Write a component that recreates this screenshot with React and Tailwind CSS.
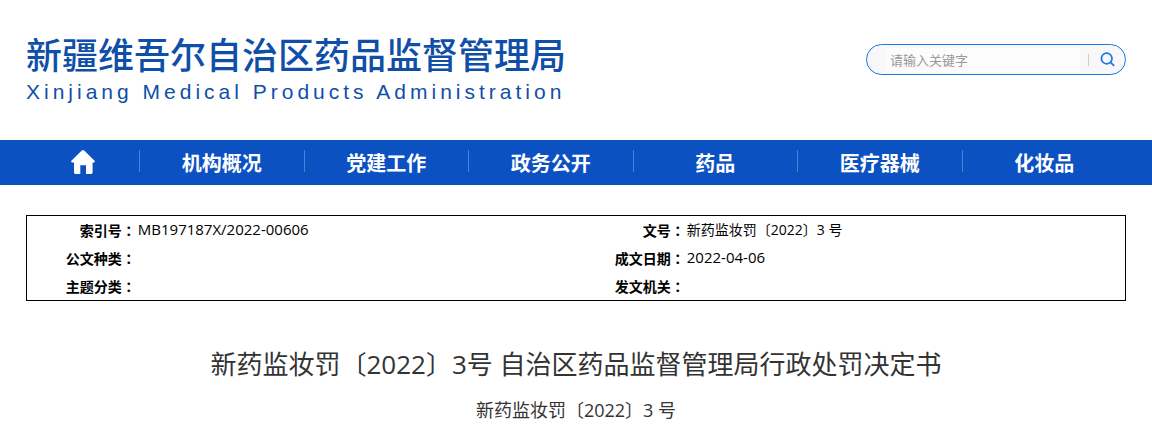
import React, { useState } from "react";

const navItems = ["机构概况", "党建工作", "政务公开", "药品", "医疗器械", "化妆品"];

const infoRows = [
  [
    { label: "索引号", value: "MB197187X/2022-00606", size: "text-[15px]" },
    { label: "文号", value: "新药监妆罚〔2022〕3 号", size: "text-sm" },
  ],
  [
    { label: "公文种类", value: "", size: "text-sm" },
    { label: "成文日期", value: "2022-04-06", size: "text-[15px]" },
  ],
  [
    { label: "主题分类", value: "", size: "text-sm" },
    { label: "发文机关", value: "", size: "text-sm" },
  ],
];

const HomeIcon = () => (
  <svg width="24" height="24" viewBox="0 0 24 24" fill="#fff" aria-hidden="true">
    <path d="M12 0 Q12.6 0 13.2 0.6 L23.6 10.8 Q24.4 12.4 22.8 12.4 H21.6 V22.6 Q21.6 24 20.2 24 H15 V15.2 H9.3 V24 H4.4 Q3 24 3 22.6 V12.4 H1.2 Q-0.4 12.4 0.4 10.8 L10.8 0.6 Q11.4 0 12 0 Z" />
  </svg>
);

const SearchIcon = () => (
  <svg width="15" height="15" viewBox="0 0 15 15" fill="none" stroke="#1677ea" strokeWidth="1.7" aria-hidden="true">
    <circle cx="6.7" cy="6.5" r="5.3" />
    <path d="M10.5 10.3 L14.2 13.9" />
  </svg>
);

const App = () => {
  const [keyword, setKeyword] = useState("");

  return (
    <div className="bg-white font-['Open_Sans','Noto_Sans_CJK_SC',sans-serif]" lang="zh-CN">
      {/* Header */}
      <header className="flex items-start justify-between px-[26px] pt-[27px] pb-[35px]">
        <div className="text-[#0f4fa8]">
          <h1 className="font-['Noto_Sans_CJK_SC',sans-serif] text-4xl leading-[52px] font-medium">
            新疆维吾尔自治区药品监督管理局
          </h1>
          <p className="font-['Liberation_Sans',sans-serif] text-[21px] leading-[26px] tracking-[4px] whitespace-nowrap">
            Xinjiang Medical Products Administration
          </p>
        </div>

        <form
          className="mt-[17px] flex h-[31px] w-[260px] items-center rounded-full border border-[#1677ea] bg-[#f8f8f8] pr-2 pl-[19px]"
          onSubmit={(e) => e.preventDefault()}
        >
          <input
            type="text"
            aria-label="请输入关键字"
            placeholder="请输入关键字"
            value={keyword}
            onChange={(e) => setKeyword(e.target.value)}
            className="h-6 min-w-0 flex-1 bg-[#fcfcfc] px-1 text-[13px] text-[#333] outline-none placeholder:text-[#999]"
          />
          <span className="ml-2 h-3 w-px bg-[#ccc]" />
          <button type="submit" aria-label="搜索" className="ml-2 flex h-6 w-5 items-center justify-center">
            <SearchIcon />
          </button>
        </form>
      </header>

      {/* Main navigation */}
      <nav className="flex h-[45px] items-start bg-[#0b51c1] px-[26px] pt-[10px] text-xl leading-7 font-bold text-white">
        <a href="#" aria-label="首页" className="flex w-[113px] justify-center">
          <HomeIcon />
        </a>
        {navItems.map((item) => (
          <a
            key={item}
            href="#"
            className="flex h-[22px] flex-1 items-start justify-center border-l border-[#4a82d8]"
          >
            {item}
          </a>
        ))}
      </nav>

      {/* Document info */}
      <main className="px-[26px] pt-[30px]">
        <div className="border border-black">
          <table className="w-full table-fixed text-sm text-black">
            <tbody>
              {infoRows.map((row, i) => (
                <tr key={i} className="h-7">
                  {row.map(({ label, value, size }) => (
                    <React.Fragment key={label}>
                      <th scope="row" className="w-1/10 pr-px text-right font-bold whitespace-nowrap">
                        {label}
                        <span className="font-['Noto_Sans_CJK_TC',sans-serif]" lang="zh-TW">：</span>
                      </th>
                      <td className={`w-4/10 pl-px ${size}`}>{value}</td>
                    </React.Fragment>
                  ))}
                </tr>
              ))}
            </tbody>
          </table>
        </div>

        <h2 className="mt-11 text-center text-[26px] leading-[38px] text-[#333]">
          新药监妆罚〔2022〕3号 自治区药品监督管理局行政处罚决定书
        </h2>
        <p className="mt-[13px] text-center text-lg leading-7 text-[#333]">新药监妆罚〔2022〕3 号</p>
      </main>
    </div>
  );
};

export default App;
